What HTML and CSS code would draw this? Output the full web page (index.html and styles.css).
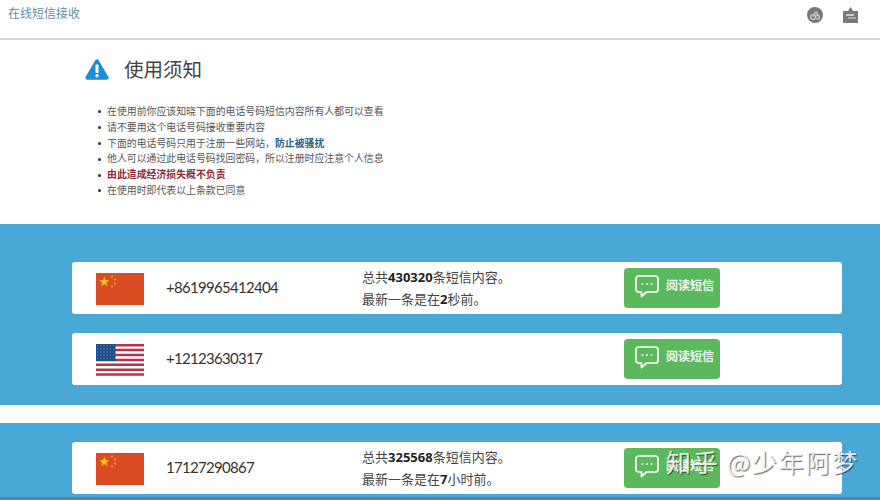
FILE: index.html
```html
<!DOCTYPE html>
<html lang="zh">
<head>
<meta charset="utf-8">
<title>在线短信接收</title>
<link rel="stylesheet" href="styles.css">
</head>
<body>
<header class="nav">
  <a class="brand">在线短信接收</a>
  <div class="nav-icons">
    <svg class="nav-icon" width="16" height="16" viewBox="0 0 16 16"><circle cx="8" cy="8" r="8" fill="#77797b"/><circle cx="6" cy="10" r="2.400" fill="none" stroke="#c9cbcc" stroke-width="1.200"/><circle cx="10.500" cy="10" r="2" fill="none" stroke="#c9cbcc" stroke-width="1.200"/><path d="M6 10 8 5h2l1 5M7 7h3" fill="none" stroke="#c9cbcc" stroke-width="1"/></svg>
    <svg class="nav-icon" width="15" height="16" viewBox="0 0 15 16"><path d="M7.500 0 5 4h5z" fill="#77797b"/><rect x="0" y="4" width="15" height="12" fill="#77797b"/><rect x="3" y="7" width="8" height="2" fill="#c9cbcc"/><rect x="5" y="10" width="8" height="2" fill="#a9abac"/></svg>
  </div>
</header>

<section class="notice">
  <div class="notice-title">
    <svg width="24" height="21" viewBox="0 0 24 21"><path d="M12 .3c.7 0 1.300.4 1.700 1l9.600 16.500c.8 1.300-.1 2.900-1.700 2.900H2.400C.8 20.700-.1 19.100.7 17.800L10.300 1.300c.4-.6 1-1 1.700-1z" fill="#1b8fd2"/><rect x="10.500" y="5.500" width="3" height="8.500" rx="1" fill="#fff"/><circle cx="12" cy="16.800" r="1.700" fill="#fff"/></svg>
    <h1>使用须知</h1>
  </div>
  <ul class="rules">
    <li><span>在使用前你应该知晓下面的电话号码短信内容所有人都可以查看</span></li>
    <li><span>请不要用这个电话号码接收重要内容</span></li>
    <li><span>下面的电话号码只用于注册一些网站，<strong class="accent">防止被骚扰</strong></span></li>
    <li><span>他人可以通过此电话号码找回密码，所以注册时应注意个人信息</span></li>
    <li><span><strong class="warn">由此造成经济损失概不负责</strong></span></li>
    <li><span>在使用时即代表以上条款已同意</span></li>
  </ul>
</section>

<section class="band band-first">
  <article class="card">
    <svg class="flag" viewBox="0 0 48 32"><use href="#cn"/></svg>
    <div class="phone">+8619965412404</div>
    <div class="info"><p>总共<b>430320</b>条短信内容。</p><p>最新一条是在<b>2</b>秒前。</p></div>
    <a class="read"><svg width="24" height="23" viewBox="0 0 24 23"><use href="#chat"/></svg><span>阅读短信</span></a>
  </article>
  <article class="card">
    <svg class="flag" viewBox="0 0 48 32"><use href="#us"/></svg>
    <div class="phone">+12123630317</div>
    <div class="info"></div>
    <a class="read"><svg width="24" height="23" viewBox="0 0 24 23"><use href="#chat"/></svg><span>阅读短信</span></a>
  </article>
</section>

<div class="spacer"></div>

<section class="band band-last">
  <article class="card">
    <svg class="flag" viewBox="0 0 48 32"><use href="#cn"/></svg>
    <div class="phone">17127290867</div>
    <div class="info"><p>总共<b>325568</b>条短信内容。</p><p>最新一条是在<b>7</b>小时前。</p></div>
    <a class="read"><svg width="24" height="23" viewBox="0 0 24 23"><use href="#chat"/></svg><span>阅读短信</span></a>
  </article>
</section>

<div class="watermark">知乎 @少年阿梦</div>

<svg class="defs" width="0" height="0">
  <defs>
    <pattern id="stars" width="3.200" height="3.200" patternUnits="userSpaceOnUse">
      <circle cx="1.600" cy="1.600" r=".6" fill="#7f9cc4"/>
    </pattern>
    <g id="cn">
      <rect width="48" height="32" fill="#dc4c24"/>
      <path d="M8.300 3.500 9.500 7.200h3.900L10.300 9.500l1.200 3.700-3.200-2.300-3.200 2.300 1.200-3.700L3.200 7.200h3.900z" fill="#fdc71e"/>
      <circle cx="16" cy="3.500" r="1" fill="#f5b02a"/><circle cx="19" cy="6.500" r="1" fill="#f5b02a"/><circle cx="19" cy="10.500" r="1" fill="#f5b02a"/><circle cx="16" cy="13.500" r="1" fill="#f5b02a"/>
    </g>
    <g id="us">
      <rect width="48" height="32" fill="#fff"/>
      <path d="M0 1.200h48M0 6.100h48M0 11h48M0 15.900h48M0 20.800h48M0 25.700h48M0 30.600h48" stroke="#b6334f" stroke-width="2.500"/>
      <rect width="19.500" height="17" fill="#1b4a86"/>
      <rect width="19.500" height="17" fill="url(#stars)"/>
    </g>
    <g id="chat" fill="none" stroke="#fff" stroke-width="1.700" stroke-linejoin="round">
      <path d="M3.500 1h17A2.500 2.500 0 0 1 23 3.500v11a2.500 2.500 0 0 1-2.500 2.500H11.500L6.500 21.500V17h-3A2.500 2.500 0 0 1 1 14.500v-11A2.500 2.500 0 0 1 3.500 1z"/>
      <circle cx="7.500" cy="9" r=".9" fill="#fff" stroke="none"/><circle cx="12" cy="9" r=".9" fill="#fff" stroke="none"/><circle cx="16.500" cy="9" r=".9" fill="#fff" stroke="none"/>
    </g>
  </defs>
</svg>
</body>
</html>
```
FILE: styles.css
```css
* { box-sizing: border-box; }
html, body { margin: 0; padding: 0; }
body {
  width: 880px;
  height: 500px;
  overflow: hidden;
  position: relative;
  background: #fff;
  color: #444;
  font-family: "Noto Sans CJK SC", sans-serif;
}
.nav {
  height: 40px;
  padding: 4px 22px 0 8px;
  display: flex;
  justify-content: space-between;
  align-items: flex-start;
  border-bottom: 2px solid #d6d6d6;
}
.brand { font-size: 12px; line-height: 17px; color: #5f8da3; }
.nav-icons { display: flex; gap: 20px; padding-top: 3px; }
.nav-icon { display: block; }
.notice { height: 184px; padding: 16px 0 0 85px; }
.notice-title { display: flex; align-items: center; gap: 15px; height: 26px; }
.notice-title h1 { margin: 0; font-size: 19.500px; font-weight: 400; color: #444; line-height: 26px; }
.rules { margin: 22px 0 0; padding: 0 0 0 22px; list-style: none; font-size: 9.900px; line-height: 15.800px; color: #555; }
.rules li { height: 15.800px; display: flex; align-items: center; gap: 6px; margin-left: -9px; }
.rules li::before { content: ""; width: 3px; height: 3px; border-radius: 50%; background: #333; flex: none; }
.accent { color: #2a6585; }
.warn { color: #8e2a3a; }
.band { background: #4aa8d6; padding: 38px 38px 0 72px; display: flex; flex-direction: column; gap: 19px; }
.band-first { height: 181px; }
.band-last { height: 77px; padding-top: 19px; box-shadow: inset 0 -3px 0 #3d8db8; }
.spacer { height: 18px; }
.card {
  width: 770px;
  height: 52px;
  background: #fff;
  border-radius: 3px;
  display: flex;
  align-items: center;
  padding: 0 122px 0 24px;
}
.flag { width: 48px; height: 32px; flex: none; margin-top: 2px; }
.phone { width: 196px; margin: 0 0 2px 22px; font-family: Lato, sans-serif; font-size: 15px; letter-spacing: -.7px; color: #333; flex: none; }
.info { width: 262px; flex: none; font-size: 13px; font-weight: 400; color: #444; }
.info p { margin: 0; line-height: 22px; }
.info b { font-family: "Open Sans", sans-serif; font-weight: 700; color: #222; }
.read {
  width: 96px;
  height: 40px;
  flex: none;
  background: #5cb85c;
  border-radius: 4px;
  display: flex;
  align-items: flex-start;
  gap: 7px;
  padding: 7px 0 0 11px;
  color: #f2f8f2;
  font-size: 12px;
  line-height: 20px;
  font-weight: 700;
}
.read svg { flex: none; }
.watermark {
  position: absolute;
  left: 666px;
  top: 443px;
  font-size: 25px;
  line-height: 36px;
  letter-spacing: 1.700px;
  font-weight: 400;
  color: rgba(255, 255, 255, .85);
  text-shadow: 1px 1px 1px rgba(40, 40, 40, .7);
  white-space: nowrap;
}
.defs { position: absolute; }
```
